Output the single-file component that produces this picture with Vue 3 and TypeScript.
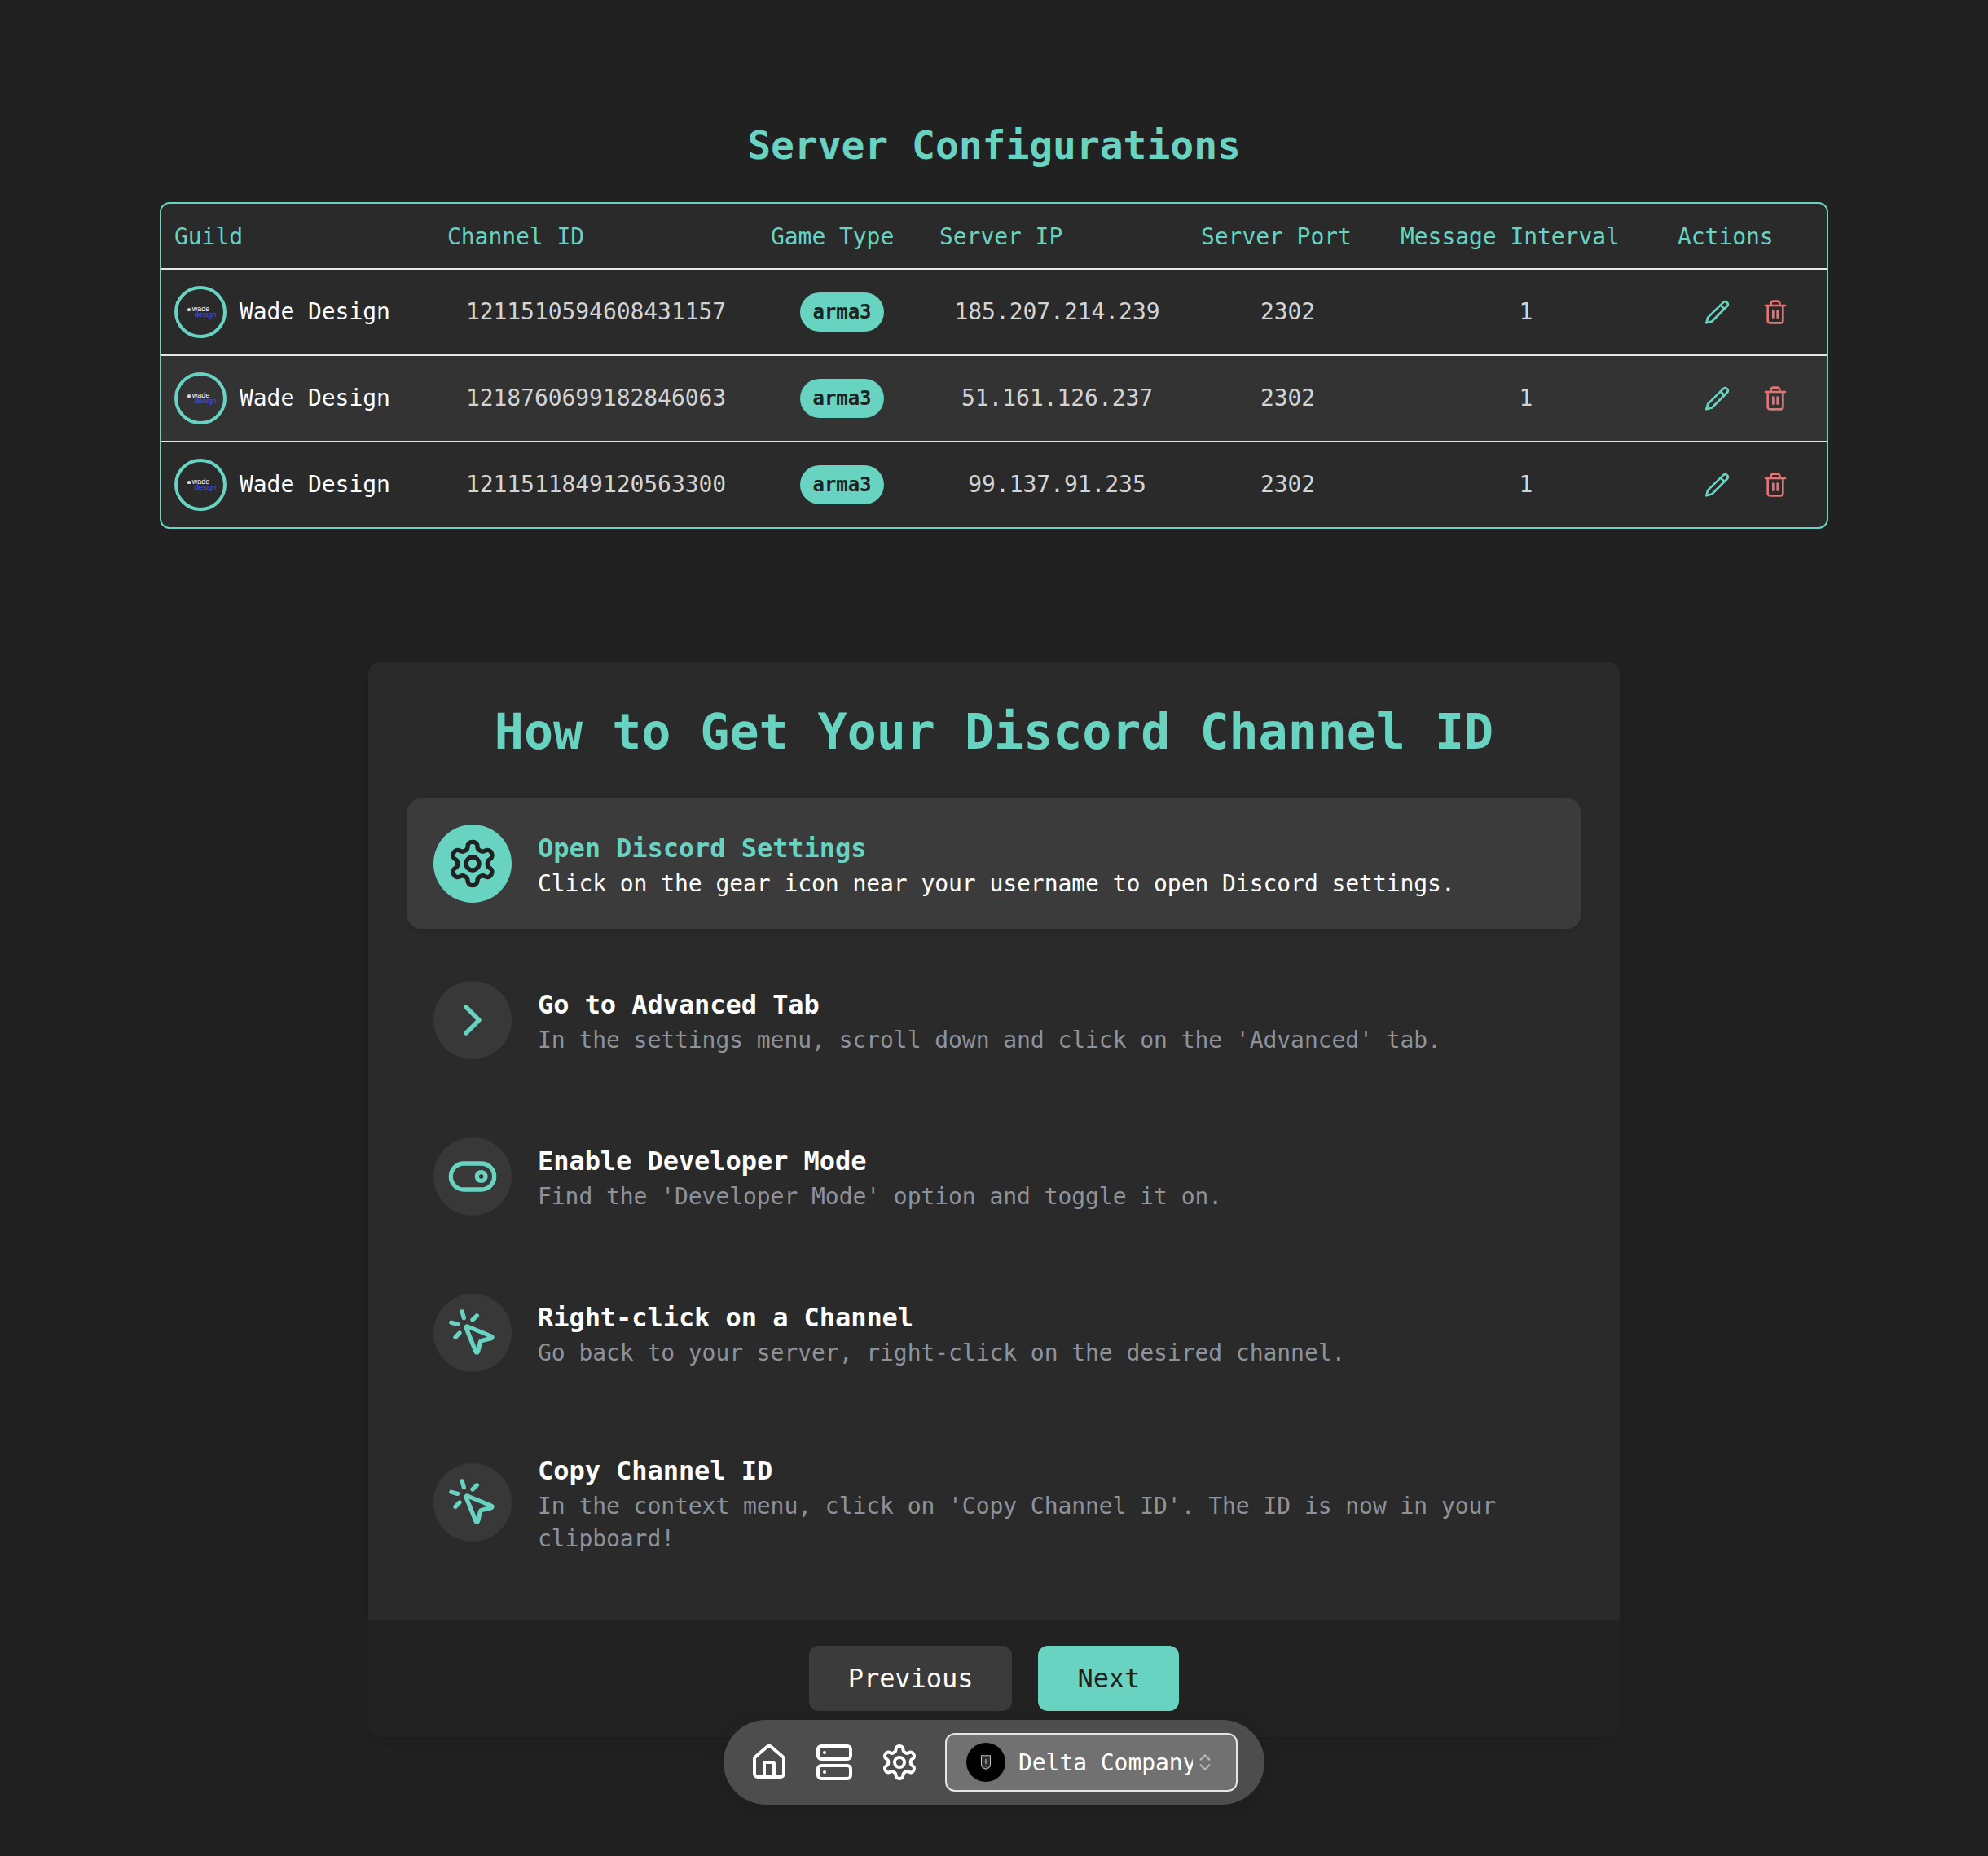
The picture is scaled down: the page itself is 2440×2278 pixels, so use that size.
<script setup lang="ts">
interface ServerRow {
  channelId: string
  ip: string
}

interface Step {
  title: string
  text: string
  icon: string
}

const servers: ServerRow[] = [
  { channelId: '1211510594608431157', ip: '185.207.214.239' },
  { channelId: '1218760699182846063', ip: '51.161.126.237' },
  { channelId: '1211511849120563300', ip: '99.137.91.235' }
]

const steps: Step[] = [
  {
    title: 'Open Discord Settings',
    text: 'Click on the gear icon near your username to open Discord settings.',
    icon: 'gear'
  },
  {
    title: 'Go to Advanced Tab',
    text: "In the settings menu, scroll down and click on the 'Advanced' tab.",
    icon: 'chevron'
  },
  {
    title: 'Enable Developer Mode',
    text: "Find the 'Developer Mode' option and toggle it on.",
    icon: 'toggle'
  },
  {
    title: 'Right-click on a Channel',
    text: 'Go back to your server, right-click on the desired channel.',
    icon: 'pointer'
  },
  {
    title: 'Copy Channel ID',
    text: "In the context menu, click on 'Copy Channel ID'. The ID is now in your clipboard!",
    icon: 'pointer'
  }
]

const gearPath =
  'M12.22 2h-.44a2 2 0 0 0-2 2v.18a2 2 0 0 1-1 1.73l-.43.25a2 2 0 0 1-2 0l-.15-.08a2 2 0 0 0-2.73.73l-.22.38a2 2 0 0 0 .73 2.73l.15.1a2 2 0 0 1 1 1.72v.51a2 2 0 0 1-1 1.74l-.15.09a2 2 0 0 0-.73 2.73l.22.38a2 2 0 0 0 2.73.73l.15-.08a2 2 0 0 1 2 0l.43.25a2 2 0 0 1 1 1.73V20a2 2 0 0 0 2 2h.44a2 2 0 0 0 2-2v-.18a2 2 0 0 1 1-1.73l.43-.25a2 2 0 0 1 2 0l.15.08a2 2 0 0 0 2.73-.73l.22-.39a2 2 0 0 0-.73-2.73l-.15-.08a2 2 0 0 1-1-1.74v-.5a2 2 0 0 1 1-1.74l.15-.09a2 2 0 0 0 .73-2.73l-.22-.38a2 2 0 0 0-2.73-.73l-.15.08a2 2 0 0 1-2 0l-.43-.25a2 2 0 0 1-1-1.73V4a2 2 0 0 0-2-2z'
</script>

<template>
  <div class="page">
    <h2 class="servers-title">Server Configurations</h2>
    <div class="table-wrap">
      <table class="servers">
        <colgroup>
          <col class="c1" />
          <col class="c2" />
          <col class="c3" />
          <col class="c4" />
          <col class="c5" />
          <col class="c6" />
          <col class="c7" />
        </colgroup>
        <thead>
          <tr>
            <th>Guild</th>
            <th>Channel ID</th>
            <th>Game Type</th>
            <th>Server IP</th>
            <th>Server Port</th>
            <th>Message Interval</th>
            <th>Actions</th>
          </tr>
        </thead>
        <tbody>
          <tr v-for="row in servers" :key="row.channelId">
            <td>
              <div class="guild">
                <span class="guild-logo">
                  <span class="wade"><i class="wade-mark"></i>wade</span>
                  <span class="design">design</span>
                </span>
                <span>Wade Design</span>
              </div>
            </td>
            <td class="num">{{ row.channelId }}</td>
            <td class="num"><span class="badge">arma3</span></td>
            <td class="num">{{ row.ip }}</td>
            <td class="num">2302</td>
            <td class="num">1</td>
            <td>
              <div class="actions">
                <svg class="icon-sm teal" viewBox="0 0 24 24">
                  <path d="M18.3 2.9a2.5 2.5 0 0 1 3.5 3.5L7.6 20.6 2.5 22l1.4-5z" />
                  <path d="m15.6 5.6 3.5 3.5" />
                </svg>
                <svg class="icon-sm red" viewBox="0 0 24 24">
                  <path d="M3 6h18" />
                  <path d="M19 6v14c0 1-1 2-2 2H7c-1 0-2-1-2-2V6" />
                  <path d="M8 6V4c0-1 1-2 2-2h4c1 0 2 1 2 2v2" />
                  <path d="M10 11v6" />
                  <path d="M14 11v6" />
                </svg>
              </div>
            </td>
          </tr>
        </tbody>
      </table>
    </div>

    <section class="guide">
      <div class="guide-body">
        <h1 class="guide-title">How to Get Your Discord Channel ID</h1>
        <div class="steps">
          <div v-for="(step, i) in steps" :key="step.title" :class="['step', { active: i === 0 }]">
            <div class="step-icon">
              <svg viewBox="0 0 24 24">
                <template v-if="step.icon === 'gear'">
                  <path :d="gearPath" />
                  <circle cx="12" cy="12" r="3" />
                </template>
                <path v-else-if="step.icon === 'chevron'" d="m9 18 6-6-6-6" />
                <template v-else-if="step.icon === 'toggle'">
                  <rect x="2" y="6" width="20" height="12" rx="6" />
                  <circle cx="16" cy="12" r="2" />
                </template>
                <template v-else>
                  <path d="M14 4.1 12 6" />
                  <path d="m5.1 8-2.9-.8" />
                  <path d="m6 12-1.9 2" />
                  <path d="M7.2 2.2 8 5.1" />
                  <path d="M9.037 9.69a.498.498 0 0 1 .653-.653l11 4.5a.5.5 0 0 1-.074.949l-4.349 1.041a1 1 0 0 0-.74.739l-1.04 4.35a.5.5 0 0 1-.95.074z" />
                </template>
              </svg>
            </div>
            <div class="step-text">
              <h3>{{ step.title }}</h3>
              <p>{{ step.text }}</p>
            </div>
          </div>
        </div>
      </div>
      <div class="guide-footer">
        <button class="btn btn-prev">Previous</button>
        <button class="btn btn-next">Next</button>
      </div>
    </section>

    <nav class="dock">
      <svg class="dock-icon" viewBox="0 0 24 24">
        <path d="M15 21v-8a1 1 0 0 0-1-1h-4a1 1 0 0 0-1 1v8" />
        <path d="M3 10a2 2 0 0 1 .709-1.528l7-5.999a2 2 0 0 1 2.582 0l7 5.999A2 2 0 0 1 21 10v9a2 2 0 0 1-2 2H5a2 2 0 0 1-2-2z" />
      </svg>
      <svg class="dock-icon" viewBox="0 0 24 24">
        <rect x="2" y="2" width="20" height="8" rx="2" />
        <rect x="2" y="14" width="20" height="8" rx="2" />
        <path d="M6 6h.01" />
        <path d="M6 18h.01" />
      </svg>
      <svg class="dock-icon" viewBox="0 0 24 24">
        <path :d="gearPath" />
        <circle cx="12" cy="12" r="3" />
      </svg>
      <button class="company">
        <span class="company-logo">
          <svg viewBox="0 0 24 24">
            <path class="shield-fill" d="M6 3h12v12c0 3-3 5-6 6-3-1-6-3-6-6z" />
            <path d="M12 8v6M10 10.500h4M10.500 17h3" />
          </svg>
        </span>
        <span class="company-name">Delta Company</span>
        <svg class="chevrons" viewBox="0 0 24 24">
          <path d="m7 15 5 5 5-5" />
          <path d="m7 9 5-5 5 5" />
        </svg>
      </button>
    </nav>
  </div>
</template>

<style>
html,
body {
  margin: 0;
  background: #212121;
}
</style>

<style scoped>
.page {
  position: relative;
  min-height: 2278px;
  box-sizing: border-box;
  padding-top: 144px;
  font-family: 'DejaVu Sans Mono', 'Liberation Mono', monospace;
  letter-spacing: -0.002em;
  color: #fff;
  font-size: 28px;
  line-height: 40px;
  background: #212121;
}

svg {
  fill: none;
  stroke: currentColor;
  stroke-width: 2;
  stroke-linecap: round;
  stroke-linejoin: round;
  display: block;
}

.servers-title {
  margin: 0 0 38px;
  padding-top: 2px;
  text-align: center;
  color: #68d3c1;
  font-size: 48px;
  line-height: 64px;
  font-weight: 700;
}

.table-wrap {
  width: 2048px;
  margin: 0 auto 163px;
  box-sizing: border-box;
  border: 2px solid #68d3c1;
  border-radius: 12px;
  overflow: hidden;
  background: #2a2a2a;
}

.servers {
  width: 2044px;
  table-layout: fixed;
  border-collapse: separate;
  border-spacing: 0;
}

.c1 { width: 335px; }
.c2 { width: 397px; }
.c3 { width: 207px; }
.c4 { width: 321px; }
.c5 { width: 245px; }
.c6 { width: 340px; }
.c7 { width: 199px; }

th {
  height: 81px;
  box-sizing: border-box;
  padding: 2px 16px 0;
  text-align: left;
  color: #68d3c1;
  font-weight: 400;
  border-bottom: 2px solid #e5e5e5;
}

td {
  height: 106px;
  box-sizing: border-box;
  padding: 0 16px;
  border-bottom: 2px solid #e5e5e5;
}

tbody tr:nth-child(even) td {
  background: #333;
}

tbody tr:last-child td {
  height: 104px;
  border-bottom: 0;
}

.num {
  text-align: center;
  color: #d4d4d4;
}

.guild {
  display: flex;
  align-items: center;
  gap: 16px;
  color: #fff;
}

.guild-logo {
  width: 64px;
  height: 64px;
  box-sizing: border-box;
  border: 4px solid #68d3c1;
  border-radius: 50%;
  display: flex;
  flex-direction: column;
  align-items: center;
  justify-content: center;
  font-family: 'Liberation Sans', sans-serif;
  letter-spacing: 0;
  font-size: 9px;
  line-height: 7px;
}

.wade {
  color: #fff;
  margin-left: -5px;
}

.wade-mark {
  display: inline-block;
  width: 4px;
  height: 4px;
  margin-right: 2px;
  border-radius: 2px 2px 1px 1px;
  background: #d8d8d8;
}

.design {
  color: #4a55e0;
  margin-left: 12px;
}

.badge {
  display: inline-block;
  padding: 8px 16px;
  border-radius: 24px;
  background: #68d3c1;
  color: #212121;
  font-size: 24px;
  line-height: 32px;
  font-weight: 700;
  vertical-align: middle;
}

.actions {
  display: flex;
  justify-content: center;
  gap: 40px;
}

.icon-sm {
  width: 32px;
  height: 32px;
}

.teal {
  color: #68d3c1;
}

.red {
  color: #e57373;
}

.guide {
  width: 1536px;
  margin: 0 auto;
  box-shadow: 0 8px 24px rgba(0, 0, 0, 0.1);
  border-radius: 16px;
}

.guide-body {
  box-sizing: border-box;
  padding: 48px;
  background: #2a2a2a;
  border-radius: 16px 16px 0 0;
}

.guide-title {
  margin: 0 0 46px;
  padding-top: 2px;
  text-align: center;
  color: #68d3c1;
  font-size: 60px;
  line-height: 72px;
  font-weight: 700;
}

.steps {
  display: flex;
  flex-direction: column;
  gap: 32px;
}

.step {
  display: flex;
  align-items: center;
  gap: 32px;
  padding: 32px;
  border-radius: 16px;
}

.step.active {
  background: #3b3b3b;
  box-shadow: 0 2px 6px rgba(0, 0, 0, 0.12);
}

.step-icon {
  flex: none;
  width: 96px;
  height: 96px;
  border-radius: 50%;
  background: #383838;
  color: #68d3c1;
  display: flex;
  align-items: center;
  justify-content: center;
}

.step-icon svg {
  width: 64px;
  height: 64px;
}

.active .step-icon {
  background: #68d3c1;
  color: #212121;
}

.step-text {
  padding-top: 1px;
  margin-bottom: -1px;
}

.step-text h3 {
  margin: 0;
  font-size: 32px;
  line-height: 48px;
  font-weight: 700;
  color: #fff;
}

.active .step-text h3 {
  color: #68d3c1;
}

.step-text p {
  margin: 0;
  color: #8e929b;
}

.active .step-text p {
  color: #fff;
}

.guide-footer {
  display: flex;
  justify-content: center;
  gap: 32px;
  padding: 32px;
  background: #222;
  border-radius: 0 0 16px 16px;
}

.btn {
  height: 80px;
  padding: 16px 48px;
  border: 0;
  border-radius: 12px;
  font-family: inherit;
  letter-spacing: inherit;
  font-size: 32px;
  line-height: 48px;
}

.btn-prev {
  background: #3b3b3b;
  color: #fff;
}

.btn-next {
  background: #68d3c1;
  color: #212121;
}

.dock {
  position: absolute;
  left: 888px;
  top: 2111px;
  width: 664px;
  height: 104px;
  box-sizing: border-box;
  padding: 16px 32px;
  display: flex;
  align-items: center;
  gap: 32px;
  border-radius: 52px;
  background: #4d4d4d;
  box-shadow: 0 8px 24px rgba(0, 0, 0, 0.15);
}

.dock-icon {
  flex: none;
  width: 48px;
  height: 48px;
  color: #fff;
}

.company {
  flex: none;
  width: 359px;
  height: 72px;
  box-sizing: border-box;
  padding: 0 24px;
  display: flex;
  align-items: center;
  border: 2px solid #e5e5e5;
  border-radius: 12px;
  background: #717171;
  color: #fff;
  font-family: inherit;
  letter-spacing: inherit;
  font-size: 28px;
  line-height: 40px;
}

.company-logo {
  flex: none;
  width: 48px;
  height: 48px;
  margin-right: 16px;
  border-radius: 50%;
  background: #000;
  color: #bdbdbd;
  display: flex;
  align-items: center;
  justify-content: center;
}

.company-logo svg {
  width: 22px;
  height: 22px;
  stroke-width: 1.2;
}

.shield-fill {
  fill: #2b2b2b;
}

.company-name {
  width: 214px;
  margin-right: 2px;
  padding-top: 2px;
  overflow: hidden;
  white-space: nowrap;
  text-align: left;
}

.chevrons {
  flex: none;
  width: 26px;
  height: 26px;
  color: rgba(255, 255, 255, 0.5);
}
</style>
